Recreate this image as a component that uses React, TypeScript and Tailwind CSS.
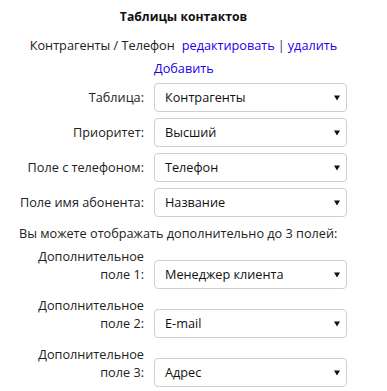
const mainRows = [
  { label: 'Таблица:', value: 'Контрагенты' },
  { label: 'Приоритет:', value: 'Высший' },
  { label: 'Поле с телефоном:', value: 'Телефон' },
  { label: 'Поле имя абонента:', value: 'Название' },
];

const extraRows = [
  { n: 1, value: 'Менеджер клиента' },
  { n: 2, value: 'E-mail' },
  { n: 3, value: 'Адрес' },
];

function FakeSelect({ value }: { value: string }) {
  return (
    <div className="flex h-[29px] w-[193px] shrink-0 items-center justify-between rounded-[4px] border border-[#cfcfcf] bg-white pl-[10px] pr-[6px] text-[#111]">
      <span>{value}</span>
      <svg width="6" height="6" viewBox="0 0 6 6" className="mt-[1px]">
        <path d="M0 0.5h6L3 5.5z" fill="#111" />
      </svg>
    </div>
  );
}

export default function App() {
  return (
    <div
      className="w-[387px] h-[391px] overflow-hidden bg-white text-[12.7px] text-[#222]"
      style={{ fontFamily: '"Open Sans", "Noto Sans", sans-serif' }}
    >
      <h1 className="pt-[8px] pr-[20px] text-center text-[12.2px] font-bold leading-[18px] text-[#111]">Таблицы контактов</h1>

      <div className="mt-[10px] flex justify-center pr-[20px] leading-[18px]">
        <span>Контрагенты / Телефон</span>
        <a className="ml-[7px] text-[#2200ee]">редактировать</a>
        <span className="mx-[3px] text-[#551a8b]">|</span>
        <a className="text-[#2200ee]">удалить</a>
      </div>
      <div className="mt-[5px] pl-[154px] leading-[18px]">
        <a className="text-[#2200ee]">Добавить</a>
      </div>

      <div className="mt-[6px] flex flex-col gap-[6px]">
        {mainRows.map((r) => (
          <div key={r.label} className="flex items-center">
            <div className="w-[144px] shrink-0 text-right">{r.label}</div>
            <div className="ml-[10px]">
              <FakeSelect value={r.value} />
            </div>
          </div>
        ))}
      </div>

      <p className="mt-[7px] pl-[19px] leading-[18px]">Вы можете отображать дополнительно до 3 полей:</p>

      <div className="mt-[5px] flex flex-col gap-[7px]">
        {extraRows.map((r) => (
          <div key={r.n} className="flex items-end">
            <div className="mb-[6px] w-[144px] shrink-0 text-right leading-[18px]">
              Дополнительное
              <br />
              поле {r.n}:
            </div>
            <div className="ml-[10px]">
              <FakeSelect value={r.value} />
            </div>
          </div>
        ))}
      </div>
    </div>
  );
}
